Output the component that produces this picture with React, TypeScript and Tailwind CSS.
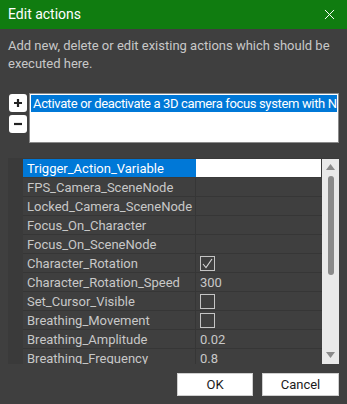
import React from "react";
import { X } from "lucide-react";

type Row = {
  name: string;
  value?: string;
  check?: boolean;
};

const rows: Row[] = [
  { name: "Trigger_Action_Variable" },
  { name: "FPS_Camera_SceneNode" },
  { name: "Locked_Camera_SceneNode" },
  { name: "Focus_On_Character" },
  { name: "Focus_On_SceneNode" },
  { name: "Character_Rotation", check: true },
  { name: "Character_Rotation_Speed", value: "300" },
  { name: "Set_Cursor_Visible", check: false },
  { name: "Breathing_Movement", check: false },
  { name: "Breathing_Amplitude", value: "0.02" },
  { name: "Breathing_Frequency", value: "0.8" },
];

function CheckBox({ checked }: { checked: boolean }) {
  return (
    <div className="w-[15px] h-[15px] border border-[#c4c4c4] flex items-center justify-center">
      {checked && (
        <svg width="13" height="13" viewBox="0 0 13 13">
          <path d="M2 7 L5 10.5 L11 2" fill="none" stroke="#d8d8d8" strokeWidth="1.1" />
        </svg>
      )}
    </div>
  );
}

export default function App() {
  return (
    <div
      className="w-[347px] h-[404px] bg-[#3f3f3f] flex flex-col overflow-hidden text-[13px]"
      style={{ fontFamily: 'Roboto, "Noto Sans", sans-serif' }}
    >
      <div className="h-[29px] bg-[#107c10] flex items-center justify-between pl-2 pr-[9px] shrink-0">
        <span className="text-white text-[14px]">Edit actions</span>
        <X className="w-[17px] h-[17px] text-white" strokeWidth={1.4} />
      </div>

      <p className="px-2 pt-2 leading-[18px] text-[#c8c8c8]">
        Add new, delete or edit existing actions which should be executed here.
      </p>

      <div className="flex mt-[20px] pl-[9px] gap-[2px]">
        <div className="flex flex-col gap-[3px] pt-px">
          <button className="w-[18px] h-[18px] bg-white rounded-[3px] flex items-center justify-center">
            <svg width="10" height="10" viewBox="0 0 10 10">
              <path d="M5 1 V9 M1 5 H9" stroke="#222" strokeWidth="2.2" />
            </svg>
          </button>
          <button className="w-[18px] h-[18px] bg-white rounded-[3px] flex items-center justify-center">
            <svg width="10" height="10" viewBox="0 0 10 10">
              <path d="M1 5 H9" stroke="#222" strokeWidth="2.2" />
            </svg>
          </button>
        </div>
        <div className="w-[310px] h-[50px] bg-white border border-[#8a8a8a] p-px">
          <div className="h-[17px] bg-[#0078d7] text-white text-[13px] tracking-[-0.35px] leading-[17px] pl-[2px] whitespace-nowrap overflow-hidden">
            Activate or deactivate a 3D camera focus system with N
          </div>
        </div>
      </div>

      <div className="mt-[15px] ml-2 w-[331px] h-[206px] bg-[#3a3a3a] flex overflow-hidden">
        <div className="flex-1 pt-px overflow-hidden">
          {rows.map((r, i) => (
            <div key={r.name} className="flex h-[19px]">
              <div className="w-[15px] shrink-0 bg-[#3a3a3a]" />
              <div
                className={
                  i === 0
                    ? "w-[173px] shrink-0 bg-[#0078d7] text-white pl-1 leading-[19px] border-b border-[#3a3a3a]"
                    : "w-[173px] shrink-0 text-[#c8c8c8] pl-1 leading-[19px] border-b border-r border-[#363636] bg-[#3f3f3f] whitespace-nowrap overflow-hidden"
                }
              >
                {r.name}
              </div>
              <div
                className={
                  i === 0
                    ? "flex-1 bg-white mr-px border-b border-[#3a3a3a]"
                    : "flex-1 pl-1 text-[#c8c8c8] leading-[19px] border-b border-[#363636] bg-[#3f3f3f] flex items-center"
                }
              >
                {r.check !== undefined ? <CheckBox checked={r.check} /> : r.value}
              </div>
            </div>
          ))}
        </div>
        <div className="w-[17px] shrink-0 bg-[#e9e9e9] flex flex-col items-center py-[3px] mt-px">
          <svg width="9" height="6" viewBox="0 0 9 6" className="mt-[2px]">
            <path d="M0 6 L4.5 0 L9 6 Z" fill="#8a8a8a" />
          </svg>
          <div className="w-[6px] h-[99px] bg-[#8a8a8a] rounded-[3px] mt-[6px]" />
          <div className="flex-1" />
          <svg width="9" height="6" viewBox="0 0 9 6" className="mb-[3px]">
            <path d="M0 0 L9 0 L4.5 6 Z" fill="#8a8a8a" />
          </svg>
        </div>
      </div>

      <div className="flex justify-end gap-[9px] pr-2 mt-[9px]">
        <button className="w-[76px] h-[23px] bg-white border border-[#cfcfcf] text-[#1a1a1a] text-[13px]">
          OK
        </button>
        <button className="w-[77px] h-[23px] bg-white border border-[#cfcfcf] text-[#1a1a1a] text-[13px]">
          Cancel
        </button>
      </div>
    </div>
  );
}
